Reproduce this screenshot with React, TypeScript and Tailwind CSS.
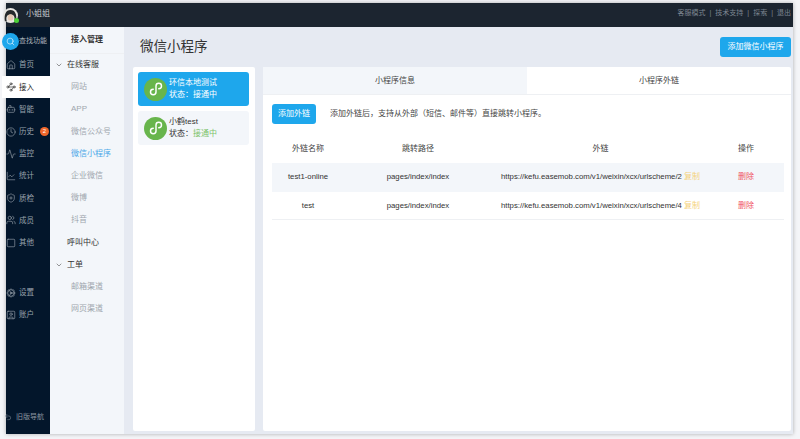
import { ChevronDown, Clock, Cog, Home, LineChart, Search, Square, SquareUser, Undo2, Users, ShieldPlus, Waypoints, Bot, Activity } from "lucide-react";

const font = "font-['Liberation_Sans','Noto_Sans_CJK_SC',sans-serif]";

const topNav = [
  { label: "首页", icon: Home },
  { label: "接入", icon: Waypoints, active: true },
  { label: "智能", icon: Bot },
  { label: "历史", icon: Clock, badge: "2" },
  { label: "监控", icon: Activity },
  { label: "统计", icon: LineChart },
  { label: "质检", icon: ShieldPlus },
  { label: "成员", icon: Users },
  { label: "其他", icon: Square },
];

function MiniProgramLogo() {
  return (
    <div className="w-[23px] h-[23px] rounded-full bg-[#68b54c] flex items-center justify-center shrink-0">
      <svg viewBox="0 0 24 24" className="w-[22px] h-[22px]" fill="none" stroke="white" strokeWidth="1.6" strokeLinecap="round">
        <path d="M9 12.2a3 3 0 1 0 3 3V8.8a3 3 0 1 1 3 3" />
      </svg>
    </div>
  );
}

function Avatar() {
  return (
    <div className="relative w-[15px] h-[15px] -ml-[3px] mt-[1px] shrink-0">
      <svg viewBox="0 0 16 16" className="w-[15px] h-[15px]">
        <circle cx="8" cy="8" r="8" fill="#e8e6e2" />
        <path d="M2 14C1 7 3 2 8 2s7 5 6 12h-2c1-4 0-7-4-7s-5 3-4 7z" fill="#26292c" />
        <ellipse cx="8" cy="10" rx="3" ry="3.4" fill="#e6c9b4" />
      </svg>
      <div className="absolute right-[-1px] bottom-[0px] w-[5px] h-[5px] rounded-full bg-[#4cd137]" />
    </div>
  );
}

function NavRow({ label, icon: Icon, active, badge }: { label: string; icon: typeof Home; active?: boolean; badge?: string }) {
  return (
    <div className={`h-[22.2px] flex items-center gap-[3px] whitespace-nowrap ${active ? "bg-white text-[#222] -ml-[4px] pl-[4px] w-[48px]" : "text-[#9aa3ad]"}`}>
      <Icon className="w-[10px] h-[10px] shrink-0" strokeWidth={1.5} />
      <span className="text-[7.5px]">{label}</span>
      {badge && <span className="ml-[3px] w-[9px] h-[9px] shrink-0 rounded-full bg-[#f0672b] text-white text-[6px] leading-[9px] text-center">{badge}</span>}
    </div>
  );
}

function SubRow({ label, blue, head, chevron }: { label: string; blue?: boolean; head?: boolean; chevron?: boolean }) {
  return (
    <div className={`h-[22.2px] flex items-center text-[8px] ${head ? "pl-[17px] text-[#333]" : "pl-[21px] text-[#a0a6ae]"} ${blue ? "!text-[#4aa8e8]" : ""} relative`}>
      {chevron && <ChevronDown className="absolute left-[5px] top-[7px] w-[8px] h-[8px]" strokeWidth={1.5} />}
      {label}
    </div>
  );
}

function Row({ name, link, striped }: { name: string; link: string; striped?: boolean }) {
  return (
    <div className={`h-[28.5px] pt-[1px] grid grid-cols-[72px_148px_217px_74px] items-center text-center text-[7.75px] text-[#333] border-b ${striped ? "bg-[#f3f6fa] border-[#f3f6fa]" : "border-[#eef0f3]"}`}>
      <div>{name}</div>
      <div>pages/index/index</div>
      <div className="whitespace-nowrap">
        {link} <span className="text-[#f5d27a] text-[8px]">复制</span>
      </div>
      <div className="text-[#f0555f] text-[8px]">删除</div>
    </div>
  );
}

export default function App() {
  return (
    <div className={`${font} w-[800px] h-[439px] bg-[#f4f5f8] pl-[6px] pt-[3px] overflow-hidden`}>
      <div className="w-[787px] h-[431px] flex flex-col shadow-[0_0_4px_rgba(0,0,0,0.3)]">
        <header className="h-[24px] bg-[#1c2530] flex items-center justify-between pr-[2px] shrink-0">
          <div className="flex items-center gap-[8px]">
            <Avatar />
            <span className="text-[8px] text-[#c4c8cc] mb-[3px]">小姐姐</span>
          </div>
          <div className="text-[7px] text-[#7c8591] flex gap-[4px] mb-[3px]">
            <span>客服模式</span><span>|</span><span>技术支持</span><span>|</span><span>探索</span><span>|</span><span>退出</span>
          </div>
        </header>
        <div className="flex flex-1 min-h-0">
          <aside className="w-[44px] bg-[#03162b] flex flex-col shrink-0">
            <div className="h-[27px] pt-[2px] flex items-center -ml-[4px] whitespace-nowrap">
              <div className="w-[17px] h-[17px] shrink-0 rounded-full bg-[#1ea7ec] flex items-center justify-center">
                <Search className="w-[9px] h-[9px] text-white" strokeWidth={1.5} />
              </div>
              <span className="text-[7px] text-[#aab2bb]">查找功能</span>
            </div>
            {topNav.map((n) => (
              <NavRow key={n.label} {...n} />
            ))}
            <div className="mt-[28px]" />
            <NavRow label="设置" icon={Cog} />
            <NavRow label="账户" icon={SquareUser} />
            <div className="mt-auto h-[22px] flex items-start gap-[4px] text-[7px] text-[#8d96a1] whitespace-nowrap -ml-[2px]">
              <Undo2 className="w-[8px] h-[8px] shrink-0 mt-[1px]" strokeWidth={1.5} />
              旧版导航
            </div>
          </aside>
          <nav className="w-[74px] bg-[#f3f6fa] shrink-0">
            <div className="h-[27px] flex items-center justify-center text-[8px] font-bold text-[#333] border-b border-[#eef0f3]">接入管理</div>
            <SubRow label="在线客服" head chevron />
            <SubRow label="网站" />
            <SubRow label="APP" />
            <SubRow label="微信公众号" />
            <SubRow label="微信小程序" blue />
            <SubRow label="企业微信" />
            <SubRow label="微博" />
            <SubRow label="抖音" />
            <SubRow label="呼叫中心" head />
            <SubRow label="工单" head chevron />
            <SubRow label="邮箱渠道" />
            <SubRow label="网页渠道" />
          </nav>
          <main className="flex-1 bg-[#e6eaf2] flex flex-col pl-[9px] pr-[2px] min-w-0">
            <div className="h-[40px] flex items-center justify-between pl-[7px] shrink-0">
              <h1 className="text-[13.5px] text-[#333]">微信小程序</h1>
              <button className="w-[71px] h-[20px] mt-[-1px] rounded-[3px] bg-[#1ea7ec] text-white text-[8px]">添加微信小程序</button>
            </div>
            <div className="flex gap-[8px] flex-1 min-h-0 pb-[3px]">
              <section className="w-[122px] bg-white rounded-[2px] p-[5px] flex flex-col gap-[5px]">
                <div className="h-[34px] w-[111px] rounded-[3px] bg-[#1ea7ec] text-white flex items-center gap-[2px] pl-[6px] text-[8px] leading-[12px]">
                  <MiniProgramLogo />
                  <div>
                    <div>环信本地测试</div>
                    <div>状态：接通中</div>
                  </div>
                </div>
                <div className="h-[34px] w-[111px] rounded-[3px] bg-[#f3f6fa] text-[#333] flex items-center gap-[2px] pl-[6px] text-[8px] leading-[12px]">
                  <MiniProgramLogo />
                  <div>
                    <div>小鹤test</div>
                    <div>状态：<span className="text-[#7cc36a]">接通中</span></div>
                  </div>
                </div>
              </section>
              <section className="flex-1 bg-white rounded-[2px] min-w-0">
                <div className="grid grid-cols-2 h-[28px] text-[8px] text-[#444] border-b border-[#eef0f3]">
                  <div className="bg-[#f3f6fa] flex items-center justify-center">小程序信息</div>
                  <div className="flex items-center justify-center">小程序外链</div>
                </div>
                <div className="pl-[9px] pr-[7px]">
                  <div className="flex items-center gap-[14px] mt-[9px]">
                    <button className="w-[44px] h-[20px] rounded-[3px] bg-[#1ea7ec] text-white text-[8px]">添加外链</button>
                    <span className="text-[8px] text-[#444]">添加外链后，支持从外部（短信、邮件等）直接跳转小程序。</span>
                  </div>
                  <div className="grid grid-cols-[72px_148px_217px_74px] h-[39px] items-center pt-[11px] text-center text-[8px] text-[#444]">
                    <div>外链名称</div>
                    <div>跳转路径</div>
                    <div>外链</div>
                    <div>操作</div>
                  </div>
                  <Row name="test1-online" link="https://kefu.easemob.com/v1/weixin/xcx/urlscheme/2" striped />
                  <Row name="test" link="https://kefu.easemob.com/v1/weixin/xcx/urlscheme/4" />
                </div>
              </section>
            </div>
          </main>
        </div>
      </div>
    </div>
  );
}
